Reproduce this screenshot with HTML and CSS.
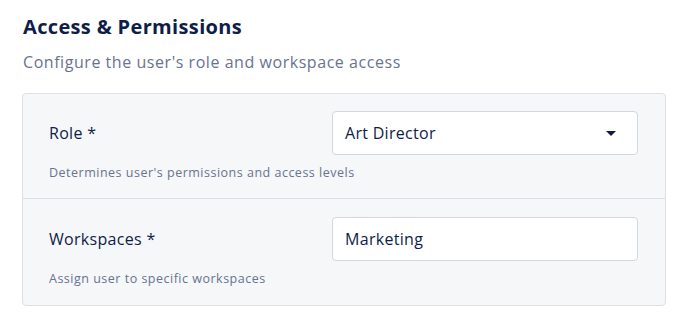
FILE: index.html
```html
<!DOCTYPE html>
<html lang="en">
<head>
    <meta charset="UTF-8">
    <meta name="viewport" content="width=device-width, initial-scale=1.0">
    <title>Access &amp; Permissions</title>
    <link rel="stylesheet" href="styles.css">
</head>
<body>
    <section class="access-section">
        <h2 class="section-title">Access &amp; Permissions</h2>
        <p class="section-subtitle">Configure the user's role and workspace access</p>

        <div class="settings-card">
            <div class="setting-row">
                <div class="field-line">
                    <label class="field-label" for="role">Role *</label>
                    <div class="select-box" id="role">
                        <span>Art Director</span>
                        <span class="caret"></span>
                    </div>
                </div>
                <p class="field-help">Determines user's permissions and access levels</p>
            </div>
            <div class="setting-row">
                <div class="field-line">
                    <label class="field-label" for="workspaces">Workspaces *</label>
                    <div class="text-box" id="workspaces">Marketing</div>
                </div>
                <p class="field-help">Assign user to specific workspaces</p>
            </div>
        </div>
    </section>
</body>
</html>
```

FILE: styles.css
```css
* {
    margin: 0;
    padding: 0;
    box-sizing: border-box;
}

body {
    background: #ffffff;
    font-family: 'Open Sans', 'Liberation Sans', sans-serif;
    color: #0e1d4a;
}

.access-section {
    padding: 14px 22px 0 22px;
}

.section-title {
    font-size: 20px;
    font-weight: 700;
    line-height: 26px;
    letter-spacing: 0.35px;
    padding-left: 1px;
    color: #0e1d4a;
}

.section-subtitle {
    margin-top: 10px;
    font-size: 16px;
    line-height: 24px;
    letter-spacing: 0.55px;
    padding-left: 1px;
    color: #68738f;
}

.settings-card {
    margin-top: 19px;
    background: #f6f7f9;
    border: 1px solid #dde1e6;
    border-radius: 4px;
}

.setting-row {
    padding: 17px 27px 16px 26px;
}

.setting-row + .setting-row {
    padding-top: 18px;
    border-top: 1px solid #dde1e6;
}

.setting-row:last-child {
    padding-bottom: 17px;
}

.field-line {
    display: flex;
    align-items: center;
    justify-content: space-between;
}

.field-label {
    font-size: 16px;
    letter-spacing: 0.3px;
    color: #0e1d4a;
}

.select-box,
.text-box {
    width: 306px;
    height: 44px;
    padding: 0 12px;
    display: flex;
    align-items: center;
    justify-content: space-between;
    background: #ffffff;
    border: 1px solid #d3d8df;
    border-radius: 4px;
    font-size: 16px;
    letter-spacing: 0.3px;
    color: #0e1d4a;
}

.caret {
    width: 0;
    height: 0;
    margin-right: 9px;
    border-left: 5px solid transparent;
    border-right: 5px solid transparent;
    border-top: 5px solid #0e1d4a;
}

.field-help {
    margin-top: 9px;
    font-size: 12.5px;
    line-height: 18px;
    letter-spacing: 0.5px;
    color: #68738f;
}
```
